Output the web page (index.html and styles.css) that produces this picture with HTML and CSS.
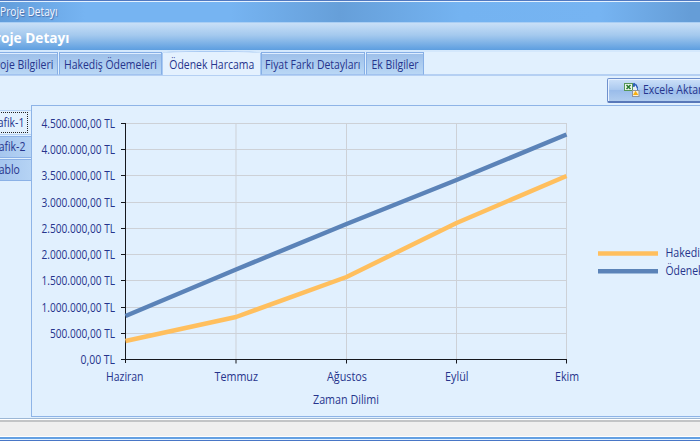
FILE: index.html
```
<!DOCTYPE html>
<html lang="tr">
<head>
<meta charset="utf-8">
<title>Proje Detayı</title>
<link rel="stylesheet" href="styles.css">
</head>
<body>
<div class="window">
  <div class="titlebar"><span>Proje Detayı</span></div>
  <div class="header"><span>Proje Detayı</span></div>
  <div class="tabs">
    <div class="tab first"><span>Proje Bilgileri</span></div>
    <div class="tab payments"><span>Hakediş Ödemeleri</span></div>
    <div class="tab active"><span>Ödenek Harcama</span></div>
    <div class="tab prices"><span>Fiyat Farkı Detayları</span></div>
    <div class="tab extra"><span>Ek Bilgiler</span></div>
  </div>
  <div class="toolbar">
    <button class="export">
      <svg width="16" height="16" viewBox="0 0 16 16">
        <path d="M8 3L10 .8L13 3L14 7V14H8Z" fill="#3e72c4"/>
        <path d="M9 5L12 3.500L13 7V14H9Z" fill="#e6edf5"/>
        <path d="M10 1V5M12 2.500L13.500 6" stroke="#2452b0" fill="none"/>
        <rect x=".5" y="1.500" width="8" height="7" fill="#edf6ea" stroke="#58975a"/>
        <path d="M2.500 3L6.500 7M6.500 3L2.500 7" stroke="#26792d" stroke-width="1.500"/>
        <rect x="8.500" y="8.500" width="6.500" height="6" fill="#f5efdc" stroke="#8d949e"/>
        <path d="M9 13L11.500 8.700L14.400 13Z" fill="#f8ae10"/>
      </svg>
      <span>Excele Aktar</span>
    </button>
  </div>
  <div class="workspace">
    <div class="side">
      <div class="side-tab current"><div class="focus"><span>Grafik-1</span></div></div>
      <div class="side-tab"><span>Grafik-2</span></div>
      <div class="side-tab table-tab"><span>Tablo</span></div>
    </div>
    <div class="panel">
      <svg class="chart" width="668" height="310" viewBox="32 106 668 310">
        <path class="grid" d="M125 123.500H567M125 149.500H567M125 175.500H567M125 202.500H567M125 228.500H567M125 254.500H567M125 280.500H567M125 307.500H567M125 333.500H567M236 123V359M346.500 123V359M456.500 123V359M566.500 123V359"/>
        <path class="axis" d="M125.500 123V363M121 359.500H567M121 123.500H125M121 149.500H125M121 175.500H125M121 202.500H125M121 228.500H125M121 254.500H125M121 280.500H125M121 307.500H125M121 333.500H125M236 359V363.500M346.500 359V363.500M456.500 359V363.500M566.500 359V363.500"/>
        <path class="line spent" d="M125.500 341L236 317L346.500 277L456.500 223L566.500 176"/>
        <path class="line budget" d="M125.500 316L236 269.500L346.500 224L456.500 180L566.500 134.500"/>
        <g class="label end">
          <text x="115" y="127.700" textLength="73.500" lengthAdjust="spacingAndGlyphs">4.500.000,00 TL</text>
          <text x="115" y="153.700" textLength="73.500" lengthAdjust="spacingAndGlyphs">4.000.000,00 TL</text>
          <text x="115" y="179.700" textLength="73.500" lengthAdjust="spacingAndGlyphs">3.500.000,00 TL</text>
          <text x="115" y="206.700" textLength="73.500" lengthAdjust="spacingAndGlyphs">3.000.000,00 TL</text>
          <text x="115" y="232.700" textLength="73.500" lengthAdjust="spacingAndGlyphs">2.500.000,00 TL</text>
          <text x="115" y="258.700" textLength="73.500" lengthAdjust="spacingAndGlyphs">2.000.000,00 TL</text>
          <text x="115" y="284.700" textLength="73.500" lengthAdjust="spacingAndGlyphs">1.500.000,00 TL</text>
          <text x="115" y="311.700" textLength="73.500" lengthAdjust="spacingAndGlyphs">1.000.000,00 TL</text>
          <text x="115" y="337.700" textLength="65" lengthAdjust="spacingAndGlyphs">500.000,00 TL</text>
          <text x="115" y="363.700" textLength="34.500" lengthAdjust="spacingAndGlyphs">0,00 TL</text>
        </g>
        <g class="label">
          <text x="106" y="381" textLength="37.500" lengthAdjust="spacingAndGlyphs">Haziran</text>
          <text x="214.500" y="381" textLength="43.500" lengthAdjust="spacingAndGlyphs">Temmuz</text>
          <text x="327" y="381" textLength="40" lengthAdjust="spacingAndGlyphs">Ağustos</text>
          <text x="445" y="381" textLength="23.500" lengthAdjust="spacingAndGlyphs">Eylül</text>
          <text x="555" y="381" textLength="24" lengthAdjust="spacingAndGlyphs">Ekim</text>
          <text x="313" y="404" textLength="66" lengthAdjust="spacingAndGlyphs">Zaman Dilimi</text>
          <text x="665.500" y="257" textLength="39.500" lengthAdjust="spacingAndGlyphs">Hakediş</text>
          <text x="665.500" y="275" textLength="38" lengthAdjust="spacingAndGlyphs">Ödenek</text>
        </g>
        <path class="line spent" d="M598 253.500H658"/>
        <path class="line budget" d="M598 271.300H658"/>
      </svg>
    </div>
  </div>
  <div class="statusbar"></div>
  <div class="frame"></div>
</div>
</body>
</html>
```
FILE: styles.css
```
* { box-sizing: border-box; }
body { margin: 0; overflow: hidden; }
.window {
  width: 700px; height: 441px; overflow: hidden;
  display: flex; flex-direction: column;
  background: #e1f0fe; color: #26348c;
  font: 12px/16px "Open Sans", "Noto Sans", sans-serif;
  white-space: nowrap;
}
span { flex: none; display: block; transform: scaleX(.87); }
.titlebar {
  height: 22px; flex: none; display: flex; align-items: center;
  border-top: 1px solid #5078c0; box-shadow: inset 0 1px #e4f1ff;
  background: linear-gradient(90deg, #629ddb 0, #76b4f2 85px, #76b4f2 230px, #669fd9 340px, #74b3f1 460px, #76b4f2 600px, #659dd7 690px);
  color: #f3f6ff; text-shadow: 1px 1px 1px #4c6da7;
}
.titlebar span { transform: scaleX(.85); transform-origin: left; }
.header {
  height: 30px; flex: none; display: flex; align-items: center;
  justify-content: flex-end; padding: 0 630px 0 0;
  background: linear-gradient(#c8dff7, #a4c9ee 45%, #5d9ee0);
  border-top: 1px solid #a9cef4; border-bottom: 2px solid #d4e8fc;
  color: white; font-size: 15px; font-weight: bold;
}
.header span { transform: scaleX(.91); transform-origin: right; }
.tabs {
  height: 24px; flex: none; display: flex; align-items: stretch;
  border-bottom: 2px solid #b5d0f3;
}
.tab {
  height: 23px; display: flex; align-items: center; justify-content: center;
  padding-top: 2px;
  border: 1px solid #86afe6; border-bottom-color: #a2c3ef;
  background: linear-gradient(#9dbfe9, #b9d7f5);
  box-shadow: inset 0 1px #deedff;
  margin-right: 1px; flex: none;
}
.first { width: 58px; justify-content: flex-end; padding-right: 4px; border-left: 0; }
.first span { transform-origin: right; }
.payments { width: 103px; margin-right: 0; }
.active {
  width: 99px; height: 24px; margin: -1px 0 0;
  background: #e4f1fe; border-color: #a9caf3; border-bottom: 0;
  border-radius: 40% 40% 0 0 / 2px; box-shadow: none;
}
.prices { width: 104px; }
.extra { width: 58px; }
.toolbar { height: 29px; flex: none; display: flex; padding: 2px 0 2px 607px; }
.export {
  width: 106px; height: 25px; flex: none; display: flex; align-items: center; gap: 3px;
  padding: 0 0 0 16px; border: 1px solid #6f91ce; border-bottom: 2px solid #5878b9;
  border-radius: 2px; background: linear-gradient(#cde1f9, #abc9ef 48%, #9abcea 52%, #b0ccef);
  box-shadow: inset 1px 1px #eaf3ff; color: #26348c; font: inherit;
}
.export svg { flex: none; }
.export span { transform-origin: left; }
.workspace { height: 312px; flex: none; display: flex; }
.side { width: 31px; flex: none; padding-top: 5px; }
.side-tab {
  height: 22px; margin-bottom: 1px; overflow: hidden; display: flex;
  align-items: center; justify-content: flex-end; padding-right: 6px;
  background: linear-gradient(90deg, #a6c6ee, #b5d3f4);
  border: 1px solid #8bb1e6; border-width: 1px 0;
}
.side-tab.current { height: 25px; background: #e3f1fe; padding-right: 3px; border-color: #b9d4f5; }
.side-tab.table-tab { padding-right: 11px; }
.side span { transform-origin: right; }
.focus { border: 1px dotted #222; padding: 2px 3px 1px 0; flex: none; }
.panel { flex: 1; border: 1px solid #8eb4e7; border-right: 0; overflow: hidden; }
.chart { display: block; }
.grid { stroke: #cdd1d7; stroke-width: 1; fill: none; }
.axis { stroke: #15171d; stroke-width: 1; fill: none; }
.line { fill: none; stroke-width: 4.5; stroke-linejoin: round; }
.spent { stroke: #ffbf5e; }
.budget { stroke: #5b83b8; }
.label { font: 12px "Open Sans", "Noto Sans", sans-serif; fill: #26348c; }
.end { text-anchor: end; }
.statusbar {
  height: 19px; flex: none; background: #efefef; margin-top: 1px;
  border-top: 1px solid #9cb7d5; border-bottom: 1px solid #fff;
  box-shadow: inset 0 1px #fff, inset 0 3px #c2c4c6;
}
.frame {
  height: 4px; flex: none;
  background: linear-gradient(#64a0e2 0 2px, #e4f2ff 2px 3px, #4976c6 3px);
}
```
